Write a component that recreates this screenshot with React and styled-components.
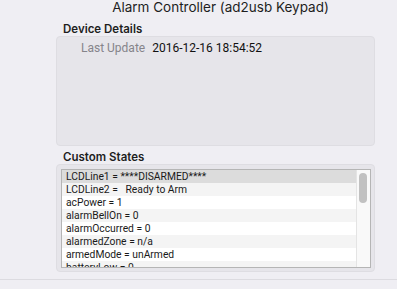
import React from "react"
import styled, { createGlobalStyle } from "styled-components"

const Global = createGlobalStyle`
  html, body { margin: 0; padding: 0; }
  body {
    background: #efeef3;
    font-family: Inter, "Noto Sans", sans-serif;
    color: #1e1e1e;
  }
`

const Window = styled.div`
  width: 397px;
  height: 289px;
  display: flex;
  flex-direction: column;
  overflow: hidden;
`

const Title = styled.div`
  height: 19px;
  padding-left: 44px;
  text-align: center;
  font-size: 13.5px;
  line-height: 16px;
  margin-top: -1px;
`

const Body = styled.div`
  padding: 0 22px 0 56px;
  display: flex;
  flex-direction: column;
`

const SectionLabel = styled.div`
  font-weight: 600;
  font-size: 11.5px;
  line-height: 14px;
  padding: 4px 0 0 7px;
  height: 18px;
  box-sizing: border-box;
`

const DetailsBox = styled.div`
  height: 110px;
  background: #e6e5ea;
  border: 1px solid #dedde2;
  border-radius: 4px;
  box-sizing: border-box;
  padding: 4px 0 0 24px;
`

const Field = styled.div`
  display: flex;
  align-items: baseline;
  gap: 7px;
  line-height: 14px;
  font-family: Roboto, sans-serif;
`

const FieldName = styled.span`
  color: #85848a;
  font-size: 12px;
`

const FieldValue = styled.span`
  color: #111;
  font-size: 12px;
`

const StatesBox = styled.div`
  height: 108px;
  background: #e6e5ea;
  border: 1px solid #dedde2;
  border-radius: 4px;
  box-sizing: border-box;
  padding: 4px 3px 3px 4px;
`

const List = styled.div`
  height: 100%;
  border: 1px solid #b5b5b5;
  box-sizing: border-box;
  display: flex;
  background: #fff;
  overflow: hidden;
`

const Rows = styled.div`
  flex: 1;
  display: flex;
  flex-direction: column;
`

const Row = styled.div`
  height: 13px;
  flex: none;
  padding-left: 4px;
  font-family: Roboto, sans-serif;
  font-size: 10.3px;
  line-height: 13px;
  white-space: pre;
  color: #1a1a1a;
  background: ${p => (p.$selected ? "#dcdcdc" : p.$alt ? "#f4f4f4" : "#ffffff")};
`

const ScrollTrack = styled.div`
  width: 14px;
  flex: none;
  background: #f9f9f9;
  border-left: 1px solid #e4e4e4;
  box-sizing: border-box;
  padding: 3px 0 0 2px;
`

const Thumb = styled.div`
  width: 8px;
  height: 30px;
  border-radius: 4px;
  background: #c1c1c1;
`

const Footer = styled.div`
  margin-top: auto;
  height: 9px;
  border-top: 1px solid #dcdbe0;
`

const states = [
  "LCDLine1 = ****DISARMED****",
  "LCDLine2 =   Ready to Arm",
  "acPower = 1",
  "alarmBellOn = 0",
  "alarmOccurred = 0",
  "alarmedZone = n/a",
  "armedMode = unArmed",
  "batteryLow = 0",
]

export default function App() {
  return (
    <Window>
      <Global />
      <Title>Alarm Controller (ad2usb Keypad)</Title>
      <Body>
        <SectionLabel>Device Details</SectionLabel>
        <DetailsBox>
          <Field>
            <FieldName>Last Update</FieldName>
            <FieldValue>2016-12-16 18:54:52</FieldValue>
          </Field>
        </DetailsBox>
        <SectionLabel>Custom States</SectionLabel>
        <StatesBox>
          <List>
            <Rows>
              {states.map((s, i) => (
                <Row key={s} $selected={i === 0} $alt={i % 2 === 1}>{s}</Row>
              ))}
            </Rows>
            <ScrollTrack>
              <Thumb />
            </ScrollTrack>
          </List>
        </StatesBox>
      </Body>
      <Footer />
    </Window>
  )
}
